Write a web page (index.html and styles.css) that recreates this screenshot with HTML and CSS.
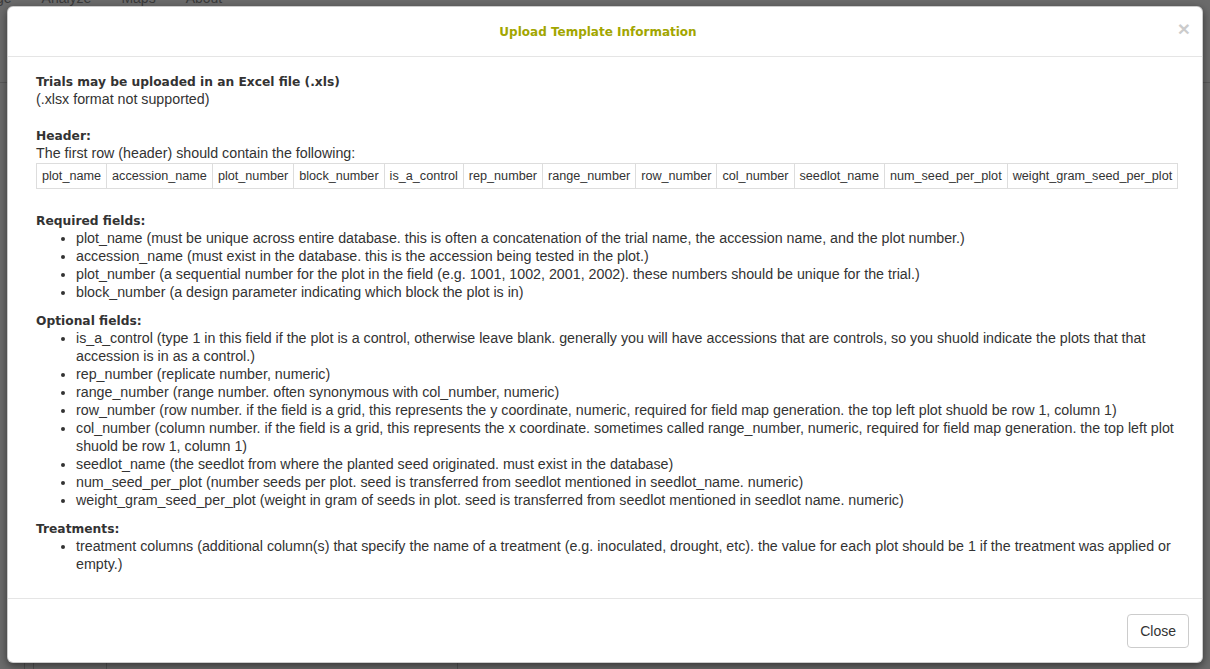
FILE: index.html
```html
<!DOCTYPE html>
<html>
<head>
<meta charset="utf-8">
<link rel="stylesheet" href="styles.css">
</head>
<body>
<div class="page">
  <nav class="navbar">
    <span>Manage</span><span>Analyze</span><span>Maps</span><span>About</span>
  </nav>
  <div class="page-rule"></div>
  <div class="page-fill"></div>
  <div class="page-cells">
    <div class="cell c1"></div><div class="cell c2"></div><div class="cell c3"></div><div class="cell c4"></div>
  </div>
</div>
<div class="backdrop">
  <div class="modal">
    <div class="modal-header">
      <h4 class="modal-title">Upload Template Information</h4>
      <span class="close">&times;</span>
    </div>
    <div class="modal-body">
      <div class="hd"><b class="heading">Trials may be uploaded in an Excel file (.xls)</b></div>
      <div>(.xlsx format not supported)</div>
      <div class="spacer"></div>
      <div class="hd"><b class="heading">Header:</b></div>
      <div>The first row (header) should contain the following:</div>
      <table class="tpl">
        <tr>
          <td>plot_name</td><td>accession_name</td><td>plot_number</td><td>block_number</td><td>is_a_control</td><td>rep_number</td><td>range_number</td><td>row_number</td><td>col_number</td><td>seedlot_name</td><td>num_seed_per_plot</td><td>weight_gram_seed_per_plot</td>
        </tr>
      </table>
      <div class="hd"><b class="heading">Required fields:</b></div>
      <ul>
        <li>plot_name (must be unique across entire database. this is often a concatenation of the trial name, the accession name, and the plot number.)</li>
        <li>accession_name (must exist in the database. this is the accession being tested in the plot.)</li>
        <li>plot_number (a sequential number for the plot in the field (e.g. 1001, 1002, 2001, 2002). these numbers should be unique for the trial.)</li>
        <li>block_number (a design parameter indicating which block the plot is in)</li>
      </ul>
      <div class="hd"><b class="heading">Optional fields:</b></div>
      <ul>
        <li>is_a_control (type 1 in this field if the plot is a control, otherwise leave blank. generally you will have accessions that are controls, so you shuold indicate the plots that that accession is in as a control.)</li>
        <li>rep_number (replicate number, numeric)</li>
        <li>range_number (range number. often synonymous with col_number, numeric)</li>
        <li>row_number (row number. if the field is a grid, this represents the y coordinate, numeric, required for field map generation. the top left plot shuold be row 1, column 1)</li>
        <li>col_number (column number. if the field is a grid, this represents the x coordinate. sometimes called range_number, numeric, required for field map generation. the top left plot shuold be row 1, column 1)</li>
        <li>seedlot_name (the seedlot from where the planted seed originated. must exist in the database)</li>
        <li>num_seed_per_plot (number seeds per plot. seed is transferred from seedlot mentioned in seedlot_name. numeric)</li>
        <li>weight_gram_seed_per_plot (weight in gram of seeds in plot. seed is transferred from seedlot mentioned in seedlot name. numeric)</li>
      </ul>
      <div class="hd"><b class="heading">Treatments:</b></div>
      <ul>
        <li>treatment columns (additional column(s) that specify the name of a treatment (e.g. inoculated, drought, etc). the value for each plot should be 1 if the treatment was applied or empty.)</li>
      </ul>
    </div>
    <div class="modal-footer">
      <button class="btn">Close</button>
    </div>
  </div>
</div>
</body>
</html>
```
FILE: styles.css
```css
html, body {
  margin: 0;
  padding: 0;
  height: 100%;
  overflow: hidden;
}
body {
  background: #6b6b6b;
  font-family: "Liberation Sans", Arial, sans-serif;
  font-size: 14.25px;
  color: #333;
  position: relative;
}
.page {
  height: 100%;
  display: flex;
  flex-direction: column;
}
.navbar {
  display: flex;
  gap: 30px;
  margin-left: -39px;
  margin-top: -10px;
  font-size: 14px;
  line-height: 16px;
  color: #3a3a3a;
  flex: none;
}
.page-rule {
  flex: none;
  margin-top: 76px;
  border-top: 1px solid #5a5a5a;
}
.page-fill {
  flex: 1;
}
.page-cells {
  flex: none;
  height: 6px;
  display: flex;
}
.cell {
  border-left: 1px solid #555;
}
.c1 { width: 24px; border-left: none; }
.c2 { width: 8px; }
.c3 { width: 72px; }
.c4 { width: 350px; border-right: 1px solid #555; }
.backdrop {
  position: absolute;
  inset: 0;
  padding: 6px 7px;
  box-sizing: border-box;
}
.modal {
  background: #fff;
  border: 1px solid rgba(0, 0, 0, 0.2);
  border-radius: 6px;
  box-shadow: 0 3px 9px rgba(0, 0, 0, 0.5);
  height: 657px;
  box-sizing: border-box;
  display: flex;
  flex-direction: column;
  position: relative;
  overflow: hidden;
}
.modal-header {
  height: 49px;
  border-bottom: 1px solid #e5e5e5;
  display: flex;
  align-items: center;
  justify-content: center;
  padding-right: 14px;
  flex: none;
}
.modal-title {
  margin: 0;
  font-family: "DejaVu Sans", Verdana, sans-serif;
  font-weight: bold;
  font-size: 12px;
  line-height: 18px;
  color: #a2a600;
}
.close {
  position: absolute;
  right: 12px;
  top: 11px;
  font-family: "Liberation Sans", Arial, sans-serif;
  font-size: 21px;
  font-weight: bold;
  line-height: 1;
  color: #000;
  opacity: 0.2;
}
.modal-body {
  flex: 1;
  min-height: 0;
  padding: 15px 25px 0 28px;
  line-height: 18px;
}
.hd {
  height: 18px;
}
.heading {
  font-family: "DejaVu Sans", Verdana, sans-serif;
  font-weight: bold;
  font-size: 12.25px;
  line-height: 1;
  color: #333;
}
.spacer {
  height: 18px;
}
.tpl {
  border-collapse: collapse;
  font-size: 12.65px;
  line-height: 16px;
  margin: 1px 0 22px;
}
.tpl td {
  border: 1px solid #ddd;
  padding: 4px 5px;
  white-space: nowrap;
}
ul {
  margin: 0 0 10px;
  padding-left: 40px;
}
.modal-footer {
  flex: none;
  border-top: 1px solid #e5e5e5;
  padding: 15px 13px 14px 15px;
  display: flex;
  justify-content: flex-end;
}
.btn {
  font-family: "Liberation Sans", Arial, sans-serif;
  font-size: 14px;
  line-height: 20px;
  padding: 6px 12px;
  color: #333;
  background: #fff;
  border: 1px solid #ccc;
  border-radius: 4px;
}
```
